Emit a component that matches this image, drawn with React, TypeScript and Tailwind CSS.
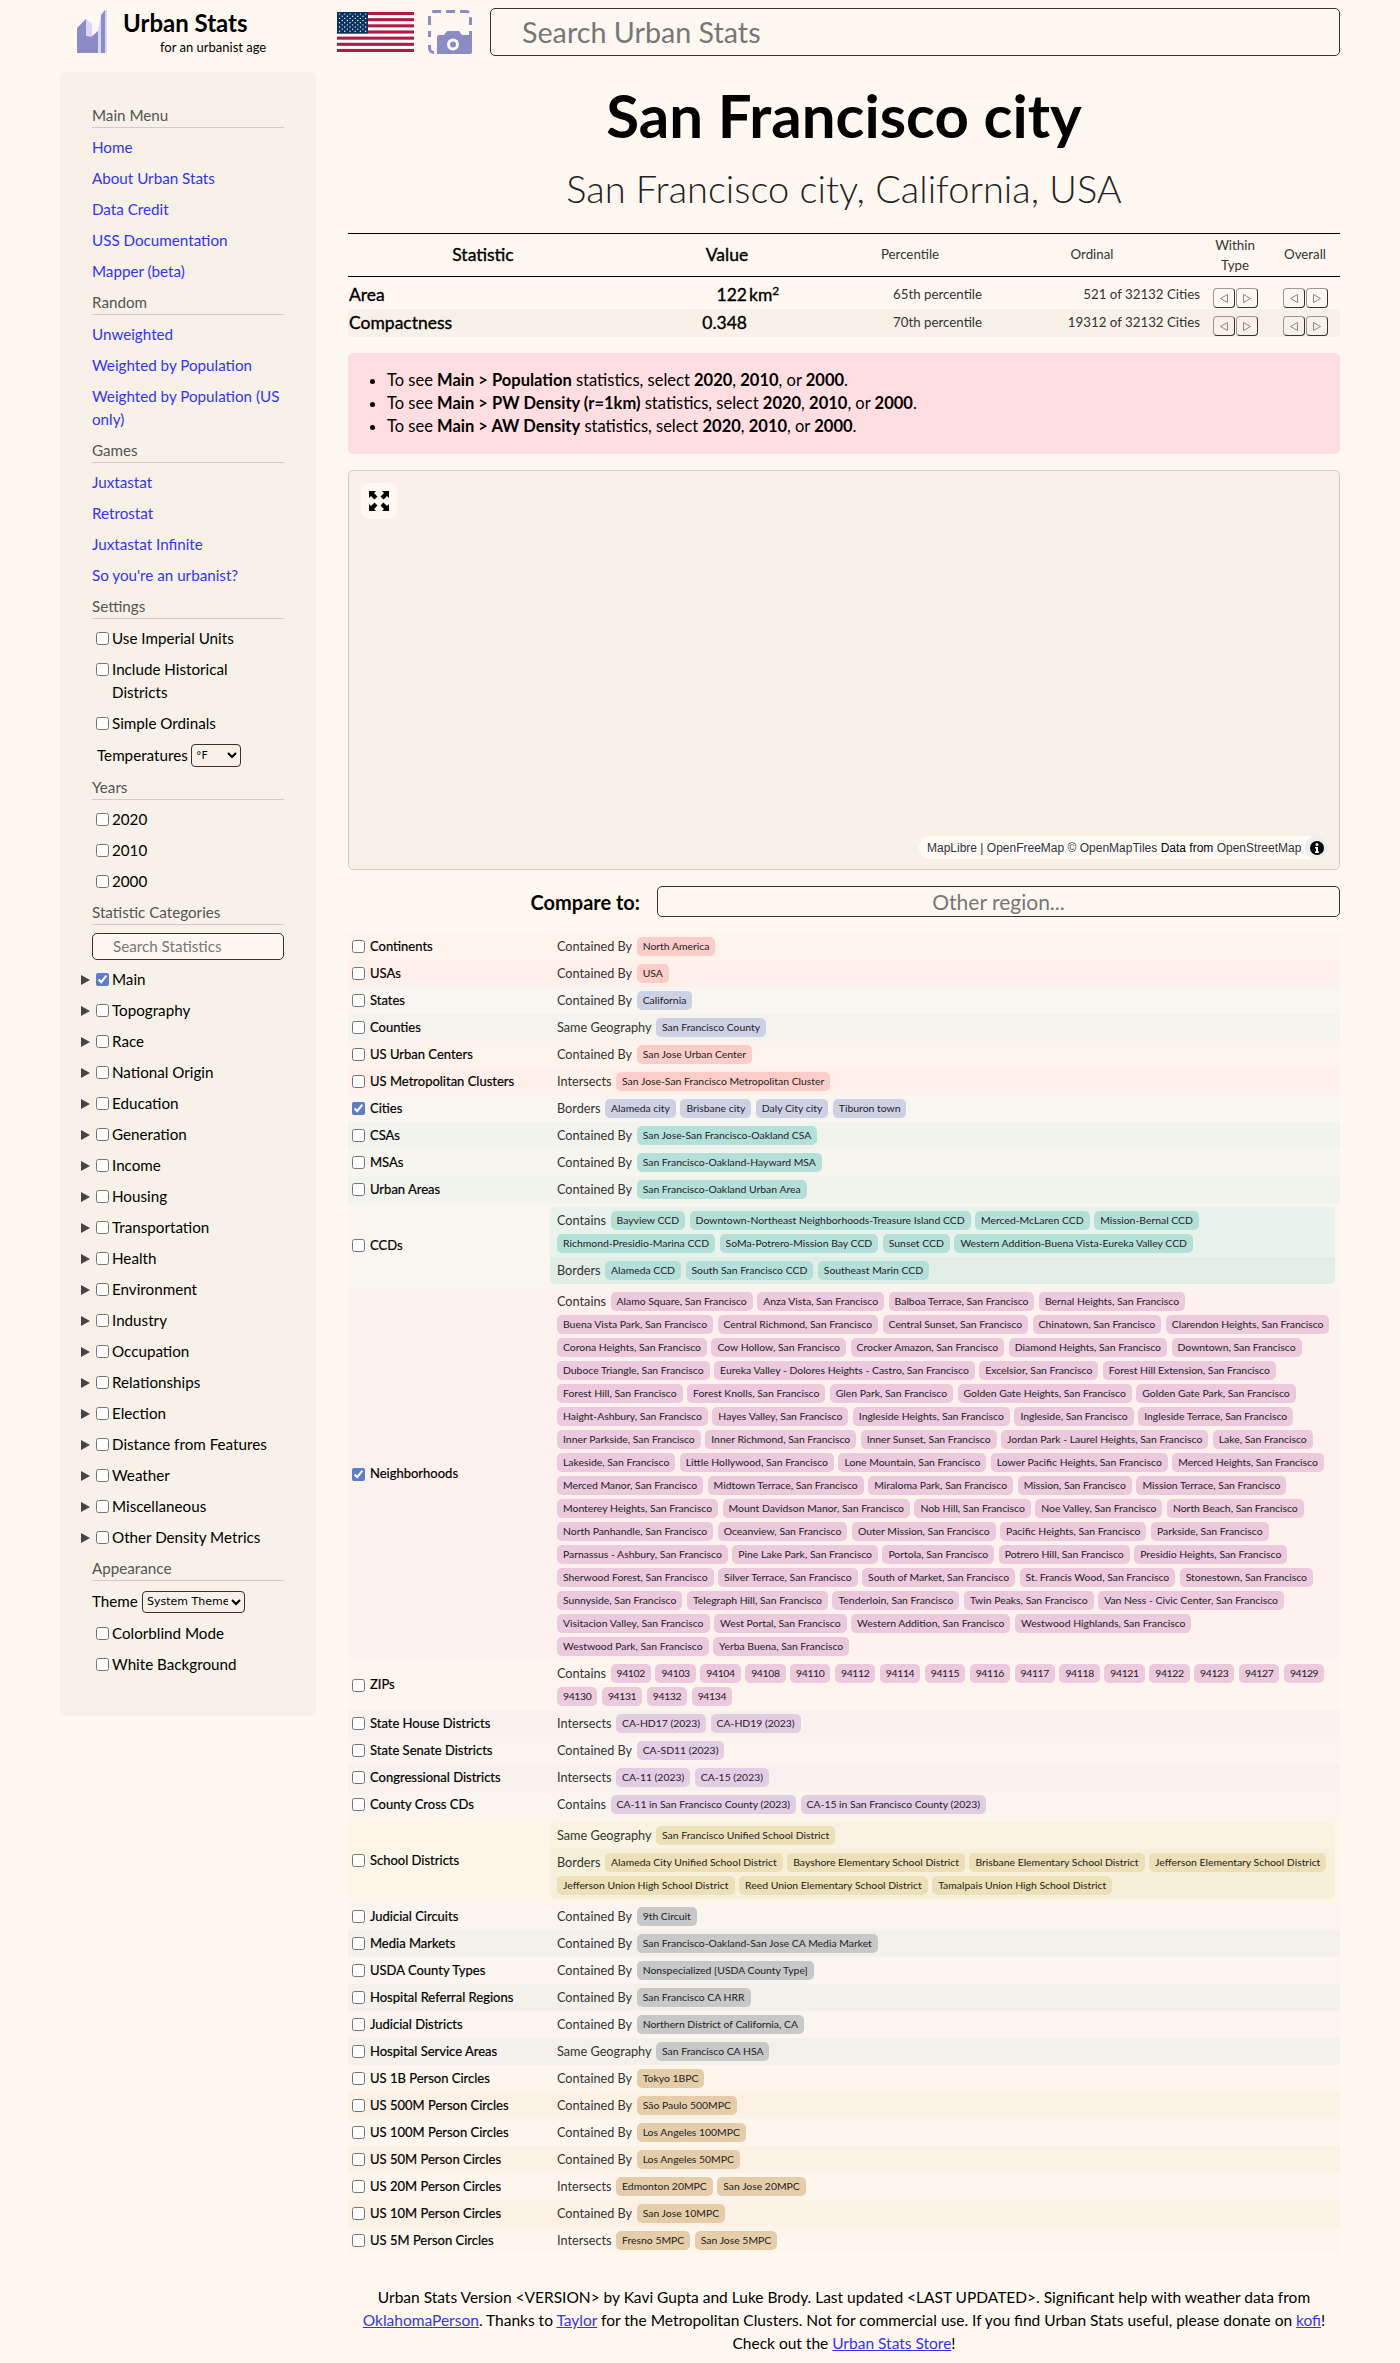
import React from "react";

const red = "bg-[#fdcdca]";
const blue = "bg-[#cdd1e4]";
const teal = "bg-[#b5e0da]";
const pink = "bg-[#ecc9dc]";
const purple = "bg-[#e3cde4]";
const yellow = "bg-[#ece0b8]";
const gray = "bg-[#c8c8c8]";
const orange = "bg-[#e6cda9]";

type Group = { label: string; lines: string[][]; bg?: string };
type Row = { name: string; bg: string; chip: string; groups: Group[]; checked?: boolean; block?: boolean };

const sf = (names: string) => names.split("|").map((n) => `${n}, San Francisco`);

const rows: Row[] = [
  { name: "Continents", bg: "bg-[#fff4ec]", chip: red, groups: [{ label: "Contained By", lines: [["North America"]] }] },
  { name: "USAs", bg: "bg-[#fff0e9]", chip: red, groups: [{ label: "Contained By", lines: [["USA"]] }] },
  { name: "States", bg: "bg-[#f9f5f0]", chip: blue, groups: [{ label: "Contained By", lines: [["California"]] }] },
  { name: "Counties", bg: "bg-[#f5f3ee]", chip: blue, groups: [{ label: "Same Geography", lines: [["San Francisco County"]] }] },
  { name: "US Urban Centers", bg: "bg-[#fff4ec]", chip: red, groups: [{ label: "Contained By", lines: [["San Jose Urban Center"]] }] },
  { name: "US Metropolitan Clusters", bg: "bg-[#fff0e9]", chip: red, groups: [{ label: "Intersects", lines: [["San Jose-San Francisco Metropolitan Cluster"]] }] },
  { name: "Cities", bg: "bg-[#f9f5f0]", chip: blue, checked: true, groups: [{ label: "Borders", lines: [["Alameda city", "Brisbane city", "Daly City city", "Tiburon town"]] }] },
  { name: "CSAs", bg: "bg-[#f1f4ec]", chip: teal, groups: [{ label: "Contained By", lines: [["San Jose-San Francisco-Oakland CSA"]] }] },
  { name: "MSAs", bg: "bg-[#f6f6ef]", chip: teal, groups: [{ label: "Contained By", lines: [["San Francisco-Oakland-Hayward MSA"]] }] },
  { name: "Urban Areas", bg: "bg-[#f1f4ec]", chip: teal, groups: [{ label: "Contained By", lines: [["San Francisco-Oakland Urban Area"]] }] },
  {
    name: "CCDs",
    bg: "bg-[#f8f6ef]",
    chip: teal,
    block: true,
    groups: [
      {
        label: "Contains",
        bg: "bg-[#e8f3ec]",
        lines: [
          ["Bayview CCD", "Downtown-Northeast Neighborhoods-Treasure Island CCD", "Merced-McLaren CCD", "Mission-Bernal CCD"],
          ["Richmond-Presidio-Marina CCD", "SoMa-Potrero-Mission Bay CCD", "Sunset CCD", "Western Addition-Buena Vista-Eureka Valley CCD"],
        ],
      },
      { label: "Borders", bg: "bg-[#e1eee6]", lines: [["Alameda CCD", "South San Francisco CCD", "Southeast Marin CCD"]] },
    ],
  },
  {
    name: "Neighborhoods",
    bg: "bg-[#fef2ee]",
    chip: pink,
    checked: true,
    groups: [
      {
        label: "Contains",
        lines: [
          sf("Alamo Square|Anza Vista|Balboa Terrace|Bernal Heights"),
          sf("Buena Vista Park|Central Richmond|Central Sunset|Chinatown|Clarendon Heights"),
          sf("Corona Heights|Cow Hollow|Crocker Amazon|Diamond Heights|Downtown"),
          sf("Duboce Triangle|Eureka Valley - Dolores Heights - Castro|Excelsior|Forest Hill Extension"),
          sf("Forest Hill|Forest Knolls|Glen Park|Golden Gate Heights|Golden Gate Park"),
          sf("Haight-Ashbury|Hayes Valley|Ingleside Heights|Ingleside|Ingleside Terrace"),
          sf("Inner Parkside|Inner Richmond|Inner Sunset|Jordan Park - Laurel Heights|Lake"),
          sf("Lakeside|Little Hollywood|Lone Mountain|Lower Pacific Heights|Merced Heights"),
          sf("Merced Manor|Midtown Terrace|Miraloma Park|Mission|Mission Terrace"),
          sf("Monterey Heights|Mount Davidson Manor|Nob Hill|Noe Valley|North Beach"),
          sf("North Panhandle|Oceanview|Outer Mission|Pacific Heights|Parkside"),
          sf("Parnassus - Ashbury|Pine Lake Park|Portola|Potrero Hill|Presidio Heights"),
          sf("Sherwood Forest|Silver Terrace|South of Market|St. Francis Wood|Stonestown"),
          sf("Sunnyside|Telegraph Hill|Tenderloin|Twin Peaks|Van Ness - Civic Center"),
          sf("Visitacion Valley|West Portal|Western Addition|Westwood Highlands"),
          sf("Westwood Park|Yerba Buena"),
        ],
      },
    ],
  },
  {
    name: "ZIPs",
    bg: "bg-[#fef5ef]",
    chip: pink,
    groups: [
      {
        label: "Contains",
        lines: [
          ["94102", "94103", "94104", "94108", "94110", "94112", "94114", "94115", "94116", "94117", "94118", "94121", "94122", "94123", "94127", "94129"],
          ["94130", "94131", "94132", "94134"],
        ],
      },
    ],
  },
  { name: "State House Districts", bg: "bg-[#f8f2ef]", chip: purple, groups: [{ label: "Intersects", lines: [["CA-HD17 (2023)", "CA-HD19 (2023)"]] }] },
  { name: "State Senate Districts", bg: "bg-[#fbf5f0]", chip: purple, groups: [{ label: "Contained By", lines: [["CA-SD11 (2023)"]] }] },
  { name: "Congressional Districts", bg: "bg-[#f8f2ef]", chip: purple, groups: [{ label: "Intersects", lines: [["CA-11 (2023)", "CA-15 (2023)"]] }] },
  { name: "County Cross CDs", bg: "bg-[#fbf5f0]", chip: purple, groups: [{ label: "Contains", lines: [["CA-11 in San Francisco County (2023)", "CA-15 in San Francisco County (2023)"]] }] },
  {
    name: "School Districts",
    bg: "bg-[#fcf6e9]",
    chip: yellow,
    block: true,
    groups: [
      { label: "Same Geography", bg: "bg-[#f9f3e1]", lines: [["San Francisco Unified School District"]] },
      {
        label: "Borders",
        bg: "bg-[#f7f1dc]",
        lines: [
          ["Alameda City Unified School District", "Bayshore Elementary School District", "Brisbane Elementary School District", "Jefferson Elementary School District"],
          ["Jefferson Union High School District", "Reed Union Elementary School District", "Tamalpais Union High School District"],
        ],
      },
    ],
  },
  { name: "Judicial Circuits", bg: "bg-[#faf5ef]", chip: gray, groups: [{ label: "Contained By", lines: [["9th Circuit"]] }] },
  { name: "Media Markets", bg: "bg-[#f4f0ea]", chip: gray, groups: [{ label: "Contained By", lines: [["San Francisco-Oakland-San Jose CA Media Market"]] }] },
  { name: "USDA County Types", bg: "bg-[#faf5ef]", chip: gray, groups: [{ label: "Contained By", lines: [["Nonspecialized [USDA County Type]"]] }] },
  { name: "Hospital Referral Regions", bg: "bg-[#f4f0ea]", chip: gray, groups: [{ label: "Contained By", lines: [["San Francisco CA HRR"]] }] },
  { name: "Judicial Districts", bg: "bg-[#faf5ef]", chip: gray, groups: [{ label: "Contained By", lines: [["Northern District of California, CA"]] }] },
  { name: "Hospital Service Areas", bg: "bg-[#f4f0ea]", chip: gray, groups: [{ label: "Same Geography", lines: [["San Francisco CA HSA"]] }] },
  { name: "US 1B Person Circles", bg: "bg-[#fdf6ec]", chip: orange, groups: [{ label: "Contained By", lines: [["Tokyo 1BPC"]] }] },
  { name: "US 500M Person Circles", bg: "bg-[#fbf1e4]", chip: orange, groups: [{ label: "Contained By", lines: [["São Paulo 500MPC"]] }] },
  { name: "US 100M Person Circles", bg: "bg-[#fdf6ec]", chip: orange, groups: [{ label: "Contained By", lines: [["Los Angeles 100MPC"]] }] },
  { name: "US 50M Person Circles", bg: "bg-[#fbf1e4]", chip: orange, groups: [{ label: "Contained By", lines: [["Los Angeles 50MPC"]] }] },
  { name: "US 20M Person Circles", bg: "bg-[#fdf6ec]", chip: orange, groups: [{ label: "Intersects", lines: [["Edmonton 20MPC", "San Jose 20MPC"]] }] },
  { name: "US 10M Person Circles", bg: "bg-[#fbf1e4]", chip: orange, groups: [{ label: "Contained By", lines: [["San Jose 10MPC"]] }] },
  { name: "US 5M Person Circles", bg: "bg-[#fdf6ec]", chip: orange, groups: [{ label: "Intersects", lines: [["Fresno 5MPC", "San Jose 5MPC"]] }] },
];

const categories = ["Main", "Topography", "Race", "National Origin", "Education", "Generation", "Income", "Housing", "Transportation", "Health", "Environment", "Industry", "Occupation", "Relationships", "Election", "Distance from Features", "Weather", "Miscellaneous", "Other Density Metrics"];

function Logo() {
  return (
    <svg width="30" height="43" viewBox="0 0 30 43">
      <polygon points="9,9 15,14 15,27 21,21 21,43 0,43 0,18" fill="#d6d6ff" />
      <polygon points="0,18 9,9 9,26 15,27 15,43 0,43" fill="#8b8bc5" />
      <polygon points="14,27 21,21 21,43 14,43" fill="#8b8bc5" />
      <polygon points="21,21 24,5 24,43 21,43" fill="#d6d6ff" />
      <polygon points="24,5 28,0 28,43 24,43" fill="#8b8bc5" />
      <rect x="28" y="0" width="2" height="43" fill="#d6d6ff" />
    </svg>
  );
}

function Flag() {
  const stars = [];
  for (let r = 0; r < 9; r++) {
    for (let c = 0; c < (r % 2 ? 5 : 6); c++) {
      stars.push(<circle key={`${r}-${c}`} cx={(r % 2 ? 5.2 : 2.6) + c * 5.2} cy={2.1 + r * 2.15} r="0.7" fill="#fff" />);
    }
  }
  return (
    <svg width="77" height="40" viewBox="0 0 77 40">
      <rect width="77" height="40" fill="#fff" />
      {[0, 2, 4, 6, 8, 10, 12].map((i) => (
        <rect key={i} y={(i * 40) / 13} width="77" height={40 / 13} fill="#b31942" />
      ))}
      <rect width="31" height="21.5" fill="#0a3161" />
      {stars}
    </svg>
  );
}

function Camera() {
  return (
    <svg width="44" height="44" viewBox="0 0 44 44">
      <path d="M1.5 15V6a4.5 4.5 0 0 1 4.5-4.5h32a4.5 4.5 0 0 1 4.500 4.500V15" fill="none" stroke="#8b8bc5" strokeWidth="3" strokeDasharray="9 5" />
      <path d="M1.500 21v6" fill="none" stroke="#8b8bc5" strokeWidth="3" />
      <path d="M1.500 35v3a4.500 4.500 0 0 0 4.500 4.500" fill="none" stroke="#8b8bc5" strokeWidth="3" />
      <path d="M42.500 21v6" fill="none" stroke="#8b8bc5" strokeWidth="3" />
      <path d="M9 27a2 2 0 0 1 2-2h5l3-4h12l3 4h10v17a2 2 0 0 1-2 2H9z" fill="#8b8bc5" />
      <circle cx="25" cy="34.500" r="6" fill="#fff8f0" />
      <circle cx="25" cy="34.500" r="3" fill="#8b8bc5" />
    </svg>
  );
}

function SideHead({ children }: { children: React.ReactNode }) {
  return <div className="border-b border-[#cccccc] h-[24px] text-[#555555]">{children}</div>;
}

function SideLink({ children }: { children: React.ReactNode }) {
  return <a className="text-[#3333ff] block">{children}</a>;
}

function Check({ label, checked }: { label: string; checked?: boolean }) {
  return (
    <label className="flex items-center gap-[3px] pl-[4px] text-black">
      <input type="checkbox" defaultChecked={checked} className="w-[13px] h-[13px] m-0 accent-[#5a7dd0]" />
      <span>{label}</span>
    </label>
  );
}

function Category({ label, checked }: { label: string; checked?: boolean }) {
  return (
    <div className="flex items-center -ml-[11px] h-[23px]">
      <svg width="9" height="10" viewBox="0 0 9 10" className="mr-[6px]">
        <polygon points="0,0 9,5 0,10" fill="#444444" />
      </svg>
      <input type="checkbox" defaultChecked={checked} className="w-[13px] h-[13px] m-0 mr-[3px] accent-[#5a7dd0]" />
      <span>{label}</span>
    </div>
  );
}

function Sidebar() {
  return (
    <aside className="w-[256px] shrink-0 bg-[#f7f1e8] rounded-[5px] pt-[32px] pb-[40px] px-[32px] flex flex-col gap-2 text-[15.2px] leading-[23px]">
      <SideHead>Main Menu</SideHead>
      <SideLink>Home</SideLink>
      <SideLink>About Urban Stats</SideLink>
      <SideLink>Data Credit</SideLink>
      <SideLink>USS Documentation</SideLink>
      <SideLink>Mapper (beta)</SideLink>
      <SideHead>Random</SideHead>
      <SideLink>Unweighted</SideLink>
      <SideLink>Weighted by Population</SideLink>
      <SideLink>Weighted by Population (US only)</SideLink>
      <SideHead>Games</SideHead>
      <SideLink>Juxtastat</SideLink>
      <SideLink>Retrostat</SideLink>
      <SideLink>Juxtastat Infinite</SideLink>
      <SideLink>So you're an urbanist?</SideLink>
      <SideHead>Settings</SideHead>
      <Check label="Use Imperial Units" />
      <div className="flex gap-[3px] pl-[4px]">
        <input type="checkbox" className="w-[13px] h-[13px] m-0 mt-[5px] accent-[#5a7dd0]" />
        <span>Include Historical<br />Districts</span>
      </div>
      <Check label="Simple Ordinals" />
      <div className="flex items-center h-[25px] pl-[5px]">
        <span className="w-[94px] shrink-0">Temperatures</span>
        <select className="w-[50px] h-[23px] border border-[#333333] rounded-[4px] text-[11px] font-['DejaVu_Sans',sans-serif]">
          <option>°F</option>
        </select>
      </div>
      <SideHead>Years</SideHead>
      <Check label="2020" />
      <Check label="2010" />
      <Check label="2000" />
      <SideHead>Statistic Categories</SideHead>
      <div className="h-[27px] border border-[#333333] rounded-[5px] bg-[#fff8f0] pl-[20px] text-[#777777] leading-[25px]">Search Statistics</div>
      {categories.map((c) => (
        <Category key={c} label={c} checked={c === "Main"} />
      ))}
      <SideHead>Appearance</SideHead>
      <div className="flex items-center h-[25px]">
        <span className="w-[50px] shrink-0">Theme</span>
        <select className="w-[103px] h-[22px] border border-[#333333] rounded-[4px] text-[11px] font-['DejaVu_Sans',sans-serif]">
          <option>System Theme</option>
        </select>
      </div>
      <Check label="Colorblind Mode" />
      <Check label="White Background" />
    </aside>
  );
}

function Arrows() {
  return (
    <div className="flex justify-center gap-[1px] self-end pb-[1px]">
      <span className="w-[22px] h-[20px] border border-[#999999] border-r-[#333333] border-b-[#333333] rounded-[4px] flex items-center justify-center">
        <svg width="8" height="9" viewBox="0 0 8 9"><polygon points="7.500,0.500 7.500,8.500 0.500,4.500" fill="none" stroke="#888888" /></svg>
      </span>
      <span className="w-[22px] h-[20px] border border-[#999999] border-r-[#333333] border-b-[#333333] rounded-[4px] flex items-center justify-center">
        <svg width="8" height="9" viewBox="0 0 8 9"><polygon points="0.500,0.500 0.500,8.500 7.500,4.500" fill="none" stroke="#888888" /></svg>
      </span>
    </div>
  );
}

function StatRow({ name, value, unit, pct, ord, className }: { name: string; value: string; unit?: React.ReactNode; pct: string; ord: string; className: string }) {
  return (
    <div className={`grid grid-cols-[270px_218px_148px_216px_70px_70px] items-center ${className}`}>
      <div className="pl-[1px] text-[17.5px] [-webkit-text-stroke:0.35px_black]">{name}</div>
      <div className="flex items-baseline text-[17.5px] [-webkit-text-stroke:0.35px_black]">
        <span className="w-[129px] text-right">{value}</span>
        {unit}
      </div>
      <div className="pl-[57px] text-[13.3px] text-[#333333]">{pct}</div>
      <div className="text-right text-[13.3px] text-[#333333]">{ord}</div>
      <Arrows />
      <Arrows />
    </div>
  );
}

function Chip({ text, color }: { text: string; color: string }) {
  const digits = /^\d+$/.test(text);
  return (
    <span className={`${color} ${digits ? "tracking-[-0.35px]" : ""} h-[19px] px-[6px] rounded-[5px] text-[10.4px] leading-[19px] whitespace-nowrap text-[#222222]`}>
      {text}
    </span>
  );
}

function GroupLines({ group, color }: { group: Group; color: string }) {
  return (
    <div className={`flex flex-col gap-[4px] py-[4px] pl-[7px] ${group.bg ?? ""}`}>
      {group.lines.map((line, i) => (
        <div key={i} className="flex items-center gap-[4.5px] h-[19px]">
          {i === 0 && <span className="text-[12.7px] text-[#333333] whitespace-nowrap">{group.label}</span>}
          {line.map((t) => (
            <Chip key={t} text={t} color={color} />
          ))}
        </div>
      ))}
    </div>
  );
}

function RelatedRow({ row }: { row: Row }) {
  return (
    <div className={`flex items-center ${row.bg}`}>
      <label className="w-[202px] shrink-0 flex items-center gap-[5px] pl-[4px] text-[13px] [-webkit-text-stroke:0.2px_black]">
        <input type="checkbox" defaultChecked={row.checked} className="w-[13px] h-[13px] m-0 accent-[#5a7dd0]" />
        <span>{row.name}</span>
      </label>
      <div className={row.block ? "my-[4px] w-[785px] rounded-[5px] overflow-hidden" : "flex-1"}>
        {row.groups.map((g) => (
          <GroupLines key={g.label} group={g} color={row.chip} />
        ))}
      </div>
    </div>
  );
}

export default function App() {
  const link = "text-[#3333ff] underline";
  return (
    <div className="min-h-[2363px] bg-[#fff8f0] text-black font-['Lato',sans-serif]">
      <header className="h-[72px] flex items-start pl-[77px]">
        <div className="mt-[10px] shrink-0"><Logo /></div>
        <div className="ml-[16px] w-[214px] shrink-0">
          <div className="text-[24px] leading-[30px] mt-[8px] font-bold">Urban Stats</div>
          <div className="text-[13px] leading-[18px] pl-[37px]">for an urbanist age</div>
        </div>
        <div className="mt-[12px] shrink-0"><Flag /></div>
        <div className="mt-[10px] ml-[14px] shrink-0"><Camera /></div>
        <div className="mt-[8px] ml-[18px] w-[850px] h-[48px] border border-[#333333] rounded-[5px] pl-[31px] text-[28.700px] leading-[46px] text-[#777777]">Search Urban Stats</div>
      </header>
      <div className="flex items-start pl-[60px] gap-[32px]">
        <Sidebar />
        <main className="w-[992px] pb-[8px]">
          <h1 className="text-[60px] leading-[86px] font-bold text-center">San Francisco city</h1>
          <div className="text-[38px] leading-[60px] font-light text-center text-[#222222]">San Francisco city, California, USA</div>

          <div className="mt-[15px] border-y border-black grid grid-cols-[270px_218px_148px_216px_70px_70px] items-center h-[44px] text-center">
            <div className="text-[17.5px] [-webkit-text-stroke:0.35px_black]">Statistic</div>
            <div className="text-[17.5px] [-webkit-text-stroke:0.35px_black]">Value</div>
            <div className="text-[13.3px] text-[#333333]">Percentile</div>
            <div className="text-[13.3px] text-[#333333]">Ordinal</div>
            <div className="text-[13.3px] leading-[20px] text-[#333333]">Within<br />Type</div>
            <div className="text-[13.3px] text-[#333333]">Overall</div>
          </div>
          <div>
            <StatRow
              name="Area"
              value="122"
              unit={<span className="ml-[2px]">km<sup className="text-[12px]">2</sup></span>}
              pct="65th percentile"
              ord="521 of 32132 Cities"
              className="h-[32px] pt-[4px]"
            />
            <StatRow name="Compactness" value="0.348" pct="70th percentile" ord="19312 of 32132 Cities" className="h-[28px] bg-[#f7f1e8]" />
          </div>

          <div className="mt-[16px] bg-[#ffdee1] rounded-[5px] py-[16px] pl-[39px] text-[16.500px] leading-[23px]">
            <ul className="list-disc">
              {["Population", "PW Density (r=1km)", "AW Density"].map((s) => (
                <li key={s}>
                  To see <b>Main &gt; {s}</b> statistics, select <b>2020</b>, <b>2010</b>, or <b>2000</b>.
                </li>
              ))}
            </ul>
          </div>

          <div className="relative mt-[16px] h-[400px] bg-[#f7f1e8] border border-[#cccccc] rounded-[5px]">
            <div className="absolute left-[12px] top-[12px] w-[36px] h-[36px] rounded-[8px] bg-[#fff8f0] flex items-center justify-center">
              <svg width="20" height="20" viewBox="0 0 20 20">
                <path d="M0 0h7L5 2l3.500 3.500-3 3L2 5 0 7zM20 0v7l-2-2-3.500 3.500-3-3L15 2l-2-2zM0 20v-7l2 2 3.500-3.500 3 3L5 18l2 2zM20 20h-7l2-2-3.500-3.500 3-3L18 15l2-2z" fill="#000" />
              </svg>
            </div>
            <div className="absolute right-[11px] bottom-[10px] h-[23px] w-[409px] rounded-[12px] bg-[#fffcf8] flex items-center justify-between pl-[8px] text-[12px] font-['Liberation_Sans',sans-serif] text-[#333333]">
              <span className="whitespace-nowrap">MapLibre | OpenFreeMap © OpenMapTiles <span className="text-black">Data from</span> OpenStreetMap</span>
              <span className="w-[23px] h-[23px] rounded-full bg-[#eeeeee] flex items-center justify-center">
                <svg width="14" height="14" viewBox="0 0 14 14">
                  <circle cx="7" cy="7" r="7" fill="#000" />
                  <circle cx="7" cy="3.500" r="1.500" fill="#fff" />
                  <path d="M5 6h3v4.500h1V12H5v-1.500h1V7.500H5z" fill="#fff" />
                </svg>
              </span>
            </div>
          </div>

          <div className="mt-[16px] flex items-center justify-end gap-[17px]">
            <span className="text-[20px] font-bold">Compare to:</span>
            <div className="w-[683px] h-[31px] border border-[#333333] rounded-[5px] text-center text-[21px] leading-[29px] text-[#777777]">Other region...</div>
          </div>

          <div className="mt-[16px]">
            {rows.map((r) => (
              <RelatedRow key={r.name} row={r} />
            ))}
          </div>

          <div className="mt-[32px] text-center text-[15.5px] leading-[23px]">
            Urban Stats Version &lt;VERSION&gt; by Kavi Gupta and Luke Brody. Last updated &lt;LAST UPDATED&gt;. Significant help with weather data from
            <br />
            <a className={link}>OklahomaPerson</a>. Thanks to <a className={link}>Taylor</a> for the Metropolitan Clusters. Not for commercial use. If you find Urban Stats useful, please donate on <a className={link}>kofi</a>!
            <br />
            Check out the <a className={link}>Urban Stats Store</a>!
          </div>
        </main>
      </div>
    </div>
  );
}
